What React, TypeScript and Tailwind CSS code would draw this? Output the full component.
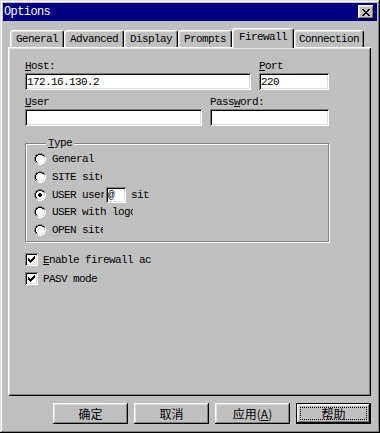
import React from "react";

const raised =
  "shadow-[inset_-1px_-1px_0_#000,inset_1px_1px_0_#fff,inset_-2px_-2px_0_#808080,inset_2px_2px_0_#dfdfdf]";
const sunken =
  "shadow-[inset_1px_1px_0_#808080,inset_-1px_-1px_0_#fff,inset_2px_2px_0_#000,inset_-2px_-2px_0_#dfdfdf]";

const mono = "font-['Liberation_Mono',monospace] text-[11px] tracking-[-0.6px] leading-[14px]";

function Field({ value, className }: { value?: string; className: string }) {
  return (
    <div className={`h-[17px] bg-white ${sunken} pl-[2px] flex items-center ${className}`}>
      {value}
    </div>
  );
}

function Radio({ on }: { on?: boolean }) {
  return (
    <svg width="12" height="12" viewBox="0 0 12 12" shapeRendering="crispEdges" className="shrink-0">
      {/* outer dark arc */}
      <path d="M4 0h4v1H4zM2 1h2v1H2zM8 1h2v1H8zM1 2h1v2H1zM0 4h1v4H0zM1 8h1v2H1z" fill="#808080" />
      <path d="M10 2h1v2h-1z" fill="#808080" />
      {/* inner black arc */}
      <path d="M4 1h4v1H4zM2 2h2v1H2zM8 2h2v1H8zM2 3h1v1H2zM1 4h1v4H1zM2 8h1v1H2z" fill="#000" />
      {/* white face */}
      <path d="M4 2h4v1H4zM3 3h6v1H3zM2 4h8v4H2zM3 8h6v1H3zM4 9h4v1H4z" fill="#fff" />
      {/* light bottom-right */}
      <path d="M10 4h1v4h-1zM9 8h1v1H9zM8 9h2v1H8zM4 10h4v1H4z" fill="#dfdfdf" />
      <path d="M11 4h1v4h-1zM10 8h1v2h-1zM8 10h2v1H8zM4 11h4v1H4z" fill="#fff" />
      {on && <path d="M5 4h2v1H5zM4 5h4v2H4zM5 7h2v1H5z" fill="#000" />}
    </svg>
  );
}

function Check() {
  return (
    <div className={`w-[13px] h-[13px] bg-white ${sunken} shrink-0 flex items-center justify-center`}>
      <svg width="7" height="7" viewBox="0 0 7 7" shapeRendering="crispEdges">
        <path
          d="M6 0h1v1H6zM5 1h2v1H5zM0 2h1v1H0zM4 2h3v1H4zM0 3h2v1H0zM3 3h3v1H3zM0 4h5v1H0zM1 5h3v1H1zM2 6h1v1H2z"
          fill="#000"
        />
      </svg>
    </div>
  );
}

function Tab({ label, w, active }: { label: string; w: number; active?: boolean }) {
  return (
    <div
      style={{ width: w }}
      className={`flex justify-center pt-[1px] border-l border-t border-white border-r border-r-black rounded-t-[3px] shadow-[inset_-1px_0_0_#808080,inset_1px_1px_0_#dfdfdf] bg-[#c0c0c0] ${
        active ? "h-[20px] relative z-10 -mb-[1px]" : "h-[17px]"
      }`}
    >
      {label}
    </div>
  );
}

export default function App() {
  return (
    <div
      className={`w-[380px] h-[433px] bg-[#c0c0c0] p-[3px] flex flex-col text-black ${mono} shadow-[inset_-1px_-1px_0_#000,inset_1px_1px_0_#dfdfdf,inset_-2px_-2px_0_#808080,inset_2px_2px_0_#fff]`}
    >
      {/* title bar */}
      <div className="h-[18px] bg-[#000080] flex items-center justify-between pl-[1px] pr-[3px]">
        <span className="text-white text-[12px]">Options</span>
        <div className={`w-[16px] h-[14px] ${raised} bg-[#c0c0c0] flex items-center justify-center`}>
          <svg width="8" height="7" viewBox="0 0 8 7" shapeRendering="crispEdges">
            <path
              d="M0 0h2v1H0zM6 0h2v1H6zM1 1h2v1H1zM5 1h2v1H5zM2 2h4v1H2zM3 3h2v1H3zM2 4h4v1H2zM1 5h2v1H1zM5 5h2v1H5zM0 6h2v1H0zM6 6h2v1H6z"
              fill="#000"
            />
          </svg>
        </div>
      </div>

      <div className="pl-[5px] flex flex-col">
        {/* tabs */}
        <div className="h-[26px] flex items-end pl-[2px]">
          <Tab label="General" w={54} />
          <Tab label="Advanced" w={60} />
          <Tab label="Display" w={54} />
          <Tab label="Prompts" w={54} />
          <Tab label="Firewall" w={62} active />
          <Tab label="Connection" w={70} />
        </div>

        {/* panel */}
        <div
          className="w-[363px] h-[349px] pt-[12px] pl-[17px] shadow-[inset_1px_1px_0_#fff,inset_-1px_-1px_0_#000,inset_2px_2px_0_#dfdfdf,inset_-2px_-2px_0_#808080]"
        >
          <div className="flex">
            <div className="w-[226px]">
              <div className="h-[14px]">
                <u>H</u>ost:
              </div>
              <Field value="172.16.130.2" className="w-[226px]" />
            </div>
            <div className="w-[70px] ml-[8px]">
              <div className="h-[14px]">
                <u>P</u>ort
              </div>
              <Field value="220" className="w-[70px]" />
            </div>
          </div>

          <div className="flex mt-[5px]">
            <div className="w-[177px]">
              <div className="h-[14px]">
                <u>U</u>ser
              </div>
              <Field className="w-[177px]" />
            </div>
            <div className="w-[119px] ml-[8px]">
              <div className="h-[14px]">
                Pass<u>w</u>ord:
              </div>
              <Field className="w-[119px]" />
            </div>
          </div>

          <fieldset className="mt-[10px] w-[304px] border border-[#808080] shadow-[inset_1px_1px_0_#fff,1px_1px_0_#fff] pl-[8px] pb-[3px]">
            <legend className="ml-[12px] px-[2px] h-[14px] bg-[#c0c0c0]">
              <u>T</u>ype
            </legend>
            <div className="h-[18px] flex items-center gap-[6px]">
              <Radio />
              <span>General</span>
            </div>
            <div className="h-[18px] flex items-center gap-[6px]">
              <Radio />
              <span className="w-[50px] overflow-hidden whitespace-nowrap">SITE site</span>
            </div>
            <div className="h-[17px] flex items-center">
              <Radio on />
              <span className="ml-[6px] w-[52px] overflow-hidden whitespace-nowrap">USER user</span>
              <div className={`ml-[2px] w-[20px] h-[16px] bg-white ${sunken} pl-[2px] flex items-center`}>@</div>
              <span className="ml-[5px]">sit</span>
            </div>
            <div className="h-[18px] flex items-center gap-[6px]">
              <Radio />
              <span className="w-[81px] overflow-hidden whitespace-nowrap">USER with logo</span>
            </div>
            <div className="h-[17px] flex items-center gap-[6px]">
              <Radio />
              <span className="w-[51px] overflow-hidden whitespace-nowrap">OPEN site</span>
            </div>
          </fieldset>

          <div className="mt-[8px] h-[19px] flex items-center gap-[5px]">
            <Check />
            <span className="whitespace-nowrap">
              <u>E</u>nable firewall ac
            </span>
          </div>
          <div className="h-[19px] flex items-center gap-[5px]">
            <Check />
            <span>PASV mode</span>
          </div>
        </div>
      </div>

      {/* buttons */}
      <div className="mt-[7px] flex justify-end gap-[6px] pr-[6px] font-['Noto_Sans_CJK_SC',sans-serif] text-[12px] tracking-normal">
        <div className={`w-[75px] h-[21px] ${raised} flex items-center justify-center`}>确定</div>
        <div className={`w-[75px] h-[21px] ${raised} flex items-center justify-center`}>取消</div>
        <div className={`w-[75px] h-[21px] ${raised} flex items-center justify-center`}>
          应用(<u>A</u>)
        </div>
        <div
          className={`w-[75px] h-[21px] border border-black shadow-[inset_-1px_-1px_0_#000,inset_1px_1px_0_#fff,inset_-2px_-2px_0_#808080,inset_2px_2px_0_#dfdfdf] p-[3px] flex`}
        >
          <div className="flex-1 border border-dotted border-black flex items-center justify-center">帮助</div>
        </div>
      </div>
    </div>
  );
}
